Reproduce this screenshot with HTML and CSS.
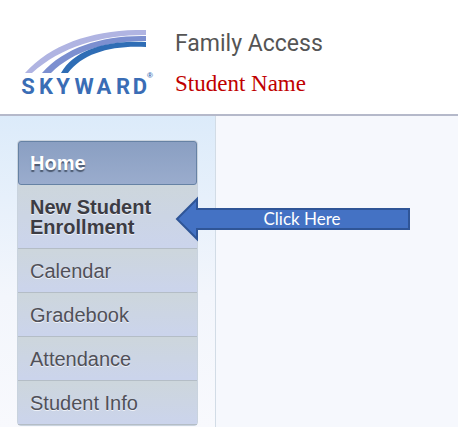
FILE: index.html
```html
<!DOCTYPE html>
<html lang="en">
<head>
    <meta charset="UTF-8">
    <meta name="viewport" content="width=device-width, initial-scale=1.0">
    <title>Family Access</title>
    <link rel="stylesheet" href="styles.css">
</head>
<body>
    <header class="header">
        <svg class="logo" width="135" height="72" viewBox="0 0 135 72" role="img" aria-label="Skyward">
            <path fill="#b0b4e2" d="M5 43 C32 13 76 -1 126 0 V5 C80 5 41 17 12 43Z"/>
            <path fill="#7c8fd0" d="M22 43 C45 17 83 5 126 6 V11 C87 11 53 21 31 43Z"/>
            <path fill="#2f6db5" d="M41 43 C54 20 86 10 126 12 V17 C92 15 63 23 48 43Z"/>
            <text class="logo-text" x="8 26 43 64 84 103 120" y="64">SKYWARD</text>
            <text class="logo-mark" x="130" y="48">®</text>
        </svg>
        <div class="titles">
            <h1 class="title">Family Access</h1>
            <p class="student">Student Name</p>
        </div>
    </header>

    <div class="page">
        <aside class="sidebar">
            <nav class="menu">
                <a class="item active" href="#">Home</a>
                <a class="item new" href="#">New Student Enrollment</a>
                <a class="item" href="#">Calendar</a>
                <a class="item" href="#">Gradebook</a>
                <a class="item" href="#">Attendance</a>
                <a class="item" href="#">Student Info</a>
            </nav>
            <div class="callout">
                <svg class="arrow" width="236" height="46" viewBox="0 0 236 46" aria-hidden="true">
                    <path d="M2 23 L22 3 V13 H234 V33 H22 V43Z"/>
                </svg>
                <span class="callout-text">Click Here</span>
            </div>
        </aside>
        <main class="content"></main>
    </div>
</body>
</html>
```

FILE: styles.css
```css
* {
    box-sizing: border-box;
}
body {
    margin: 0;
    min-height: 100vh;
    display: flex;
    flex-direction: column;
    overflow: hidden;
    background: #fff;
    font-family: "Liberation Sans", Arial, sans-serif;
}
.header {
    display: flex;
    gap: 20px;
    padding: 30px 20px 12px;
    border-bottom: 2px solid #b5b9ca;
}
.logo-text {
    font-family: Roboto, "Liberation Sans", sans-serif;
    font-size: 22px;
    font-weight: bold;
    text-anchor: middle;
    fill: #3a6db5;
}
.logo-mark {
    font-size: 8px;
    font-weight: bold;
    text-anchor: middle;
    fill: #3a6db5;
}
.title {
    margin: 0;
    font-family: Roboto, sans-serif;
    font-size: 23px;
    font-weight: 400;
    line-height: 28px;
    color: #555;
}
.student {
    margin: 12px 0 0;
    font-family: "Liberation Serif", "Times New Roman", serif;
    font-size: 23px;
    line-height: 28px;
    color: #c00000;
}
.page {
    display: flex;
    flex: 1;
}
.sidebar {
    position: relative;
    width: 216px;
    padding: 24px 17px 0;
    border-right: 1px solid #d2dce6;
    background: linear-gradient(#dcebfa, #f3f6fc 180px, #f8f9fd);
}
.menu {
    border: 1px solid #c9d3de;
    border-radius: 4px;
    background: #cbd3e6;
}
.item {
    display: block;
    padding: 12px 12px 11px;
    border-bottom: 1px solid #b4bdc6;
    font-size: 20px;
    line-height: 20px;
    color: #505058;
    text-decoration: none;
    text-shadow: 0 1px 0 #eef1f8;
    background: linear-gradient(#cdd6dc, #cbd4ec);
}
.item.active {
    border: 1px solid #6682a4;
    border-radius: 3px;
    padding: 11px;
    color: #fff;
    font-weight: bold;
    text-shadow: 0 2px 1px #4c5a70;
    background: linear-gradient(#8a9fc2, #9aaccd);
}
.item.new {
    padding-right: 40px;
    color: #3c3c44;
    font-weight: bold;
}
.content {
    flex: 1;
    background: #f6f8fd;
}
.callout {
    position: absolute;
    top: 80px;
    left: 175px;
    width: 236px;
    height: 46px;
}
.arrow {
    display: block;
}
.arrow path {
    fill: #4472c4;
    stroke: #2f5597;
    stroke-width: 2;
}
.callout-text {
    position: absolute;
    inset: 0 0 0 18px;
    text-align: center;
    font-family: Lato, "Open Sans", sans-serif;
    font-size: 17px;
    line-height: 46px;
    color: #fff;
}
```
